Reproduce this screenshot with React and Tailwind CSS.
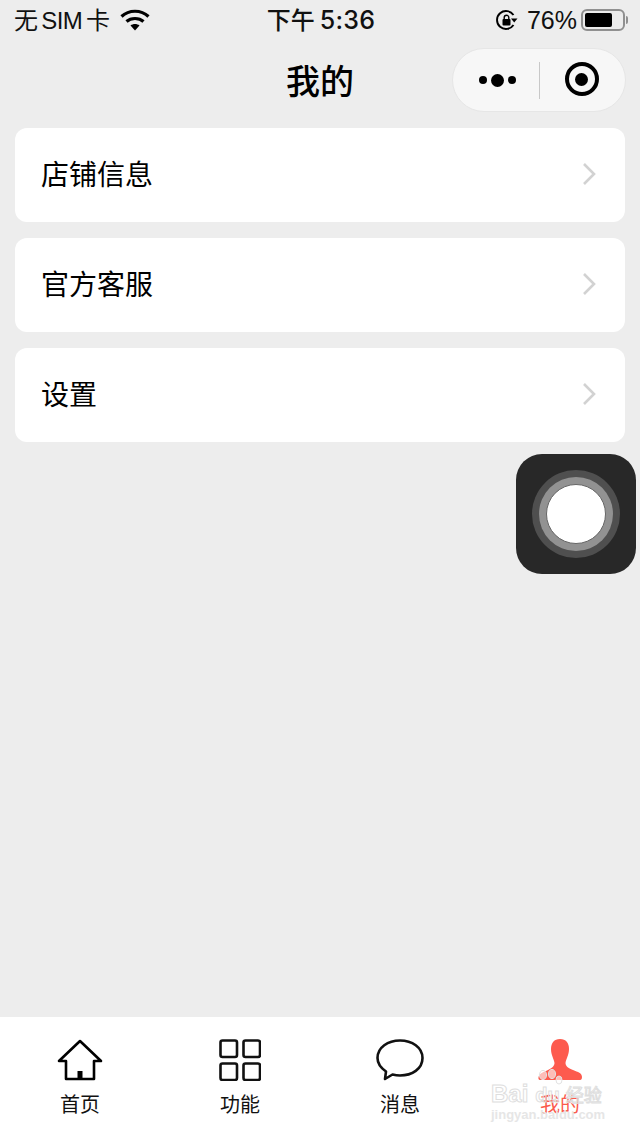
const cjk = { fontFamily: '"Liberation Sans", "Noto Sans CJK SC", sans-serif' };

function Row({ label }) {
  return (
    <div className="flex h-[94px] items-center justify-between rounded-[12px] bg-white pl-[26px] pr-[29px]">
      <span className="pt-[2px] text-[28px] leading-none text-black" style={cjk}>{label}</span>
      <svg className="mt-[-2px]" width="14" height="24" viewBox="0 0 14 24" fill="none">
        <path d="M2 2 L12 12 L2 22" stroke="#d2d2d2" strokeWidth="2.6" />
      </svg>
    </div>
  );
}

function Tab({ icon, label, active }) {
  return (
    <div className="flex flex-1 flex-col items-center pt-[19px]">
      <div className="flex h-[48px] w-[50px] items-center justify-center">{icon}</div>
      <span className={`mt-[8px] text-[20px] leading-[26px] ${active ? "text-[#fb5a4c]" : "text-[#111]"}`} style={cjk}>{label}</span>
    </div>
  );
}

export default function App() {
  return (
    <div className="relative flex h-[1136px] w-[640px] flex-col overflow-hidden bg-[#ededed]" style={cjk}>
      <div className="grid h-[40px] grid-cols-[1fr_auto_1fr] items-center pl-[14px] pr-[12px] text-[25px] leading-none text-[#111]">
        <div className="flex items-center gap-[10px]">
          <span className="pt-[2px] text-[24px] tracking-[-0.5px] [word-spacing:-2.5px]">无 SIM 卡</span>
          <svg width="30" height="22" viewBox="0 0 30 22" fill="none" stroke="#000" strokeWidth="3.2">
            <path d="M1.5 7.5 C9 0.5 21 0.5 28.5 7.5" />
            <path d="M6.5 12.5 C11 8.5 19 8.5 23.5 12.5" />
            <path d="M15 21.5 L10.5 16.5 C13 14.5 17 14.5 19.5 16.5 Z" fill="#000" stroke="none" />
          </svg>
        </div>
        <div className="flex items-center gap-[5px] pt-[1px]">
          <span className="text-[24px] font-medium">下午</span>
          <span className="text-[25px] font-medium tracking-[0.2px]" style={{ fontFamily: "Inter, sans-serif" }}>5:36</span>
        </div>
        <div className="flex items-center justify-end gap-[6px]">
          <svg width="22" height="22" viewBox="0 0 22 22" fill="none">
            <path d="M17.5 16 A9 9 0 1 1 17.5 6" stroke="#000" strokeWidth="1.9" />
            <path d="M15 9.5 L21.5 9.5 L18.2 13.5 Z" fill="#000" />
            <rect x="6.5" y="10" width="8" height="6.5" rx="1" fill="#000" />
            <path d="M8.2 10.5 V8.5 a2.3 2.3 0 0 1 4.6 0 V10.5" stroke="#000" strokeWidth="1.4" />
          </svg>
          <span className="ml-[3px] mr-[-2px] text-[25px]">76%</span>
          <div className="flex items-center">
            <div className="flex h-[22px] w-[44px] items-center rounded-[6px] border-2 border-[#909090] p-[2px]">
              <div className="h-[14px] w-[27px] rounded-[2px] bg-black" />
            </div>
            <div className="ml-[1px] h-[8px] w-[2px] rounded-r-full bg-[#909090]" />
          </div>
        </div>
      </div>

      <div className="relative flex h-[88px] items-center justify-center">
        <span className="mt-[-4px] text-[34px] font-medium leading-none text-black">我的</span>
        <div className="absolute left-[452px] top-[8px] flex h-[64px] w-[174px] items-center rounded-full border border-[#e6e6e6] bg-[#f7f7f7]">
          <div className="flex w-[86px] items-center justify-center gap-[4px] pl-[2px]">
            <div className="h-[8px] w-[8px] rounded-full bg-black" />
            <div className="h-[13px] w-[13px] rounded-full bg-black" />
            <div className="h-[8px] w-[8px] rounded-full bg-black" />
          </div>
          <div className="h-[37px] w-px bg-[#c8c8c8]" />
          <div className="flex flex-1 items-center justify-center pr-[2px]">
            <div className="mt-[-2px] flex h-[34px] w-[34px] items-center justify-center rounded-full border-[4px] border-black">
              <div className="h-[13px] w-[13px] rounded-full bg-black" />
            </div>
          </div>
        </div>
      </div>

      <div className="flex flex-1 flex-col gap-[16px] px-[15px]">
        <Row label="店铺信息" />
        <Row label="官方客服" />
        <Row label="设置" />
      </div>

      <div className="flex h-[119px] bg-white">
        <Tab
          label="首页"
          icon={
            <svg width="46" height="42" viewBox="0 0 46 42" fill="none" stroke="#000" strokeWidth="2.6" strokeLinejoin="round">
              <path d="M23 2 L44 22 H37 V40 H9 V22 H2 Z" />
              <path d="M23 32 V40" strokeWidth="5" />
            </svg>
          }
        />
        <Tab
          label="功能"
          icon={
            <svg width="42" height="42" viewBox="0 0 42 42" fill="none" stroke="#111" strokeWidth="2.6">
              <rect x="1.5" y="1.5" width="16.5" height="16.5" rx="2" />
              <rect x="24.5" y="1.5" width="16.5" height="16.5" rx="2" />
              <rect x="1.5" y="24.5" width="16.5" height="16.5" rx="2" />
              <rect x="24.5" y="24.5" width="16.5" height="16.5" rx="2" />
            </svg>
          }
        />
        <Tab
          label="消息"
          icon={
            <svg width="48" height="42" viewBox="0 0 48 42" fill="none" stroke="#111" strokeWidth="2.6" strokeLinejoin="round">
              <path d="M24 1.5 C36 1.5 46.5 8.5 46.5 19 C46.5 30 36 36.5 24 36.5 C21 36.5 18.5 36 16.5 35.5 L9 40 L10 32.5 C5 29 1.5 24.5 1.5 19 C1.5 8.5 12 1.5 24 1.5 Z" />
            </svg>
          }
        />
        <Tab
          active
          label="我的"
          icon={
            <svg width="46" height="42" viewBox="0 0 46 42">
              <path d="M23 0 C29 0 32 4 32 10 C32 16 29 20 28.5 24 C28.5 27 31 29 36 31 C41 33 45 34 45 38 C45 40.5 44 41 42 41 L4 41 C2 41 1 40.5 1.5 38 C2.5 34 7 33 11 31 C15 29 17.5 27 17.5 24 C17 20 14 16 14 10 C14 4 17 0 23 0 Z" fill="#fd5b4e" />
            </svg>
          }
        />
      </div>

      <div className="absolute left-[516px] top-[454px] flex h-[120px] w-[120px] items-center justify-center rounded-[26px] bg-[#282828]">
        <div className="flex h-[88px] w-[88px] items-center justify-center rounded-full bg-[#4f4f4f]">
          <div className="flex h-[74px] w-[74px] items-center justify-center rounded-full bg-[#929292]">
            <div className="h-[60px] w-[60px] rounded-full border border-[#666] bg-white" />
          </div>
        </div>
      </div>

      <div className="pointer-events-none absolute left-[491px] top-[1066px] w-[120px]">
        <svg className="absolute left-[44px] top-[0px]" width="30" height="24" viewBox="0 0 30 24" fill="#ffffff" fillOpacity="0.6" stroke="#e2e2e2" strokeWidth="1">
          <ellipse cx="8" cy="9" rx="3.6" ry="4.6" />
          <ellipse cx="17" cy="8" rx="3.6" ry="4.6" />
          <ellipse cx="24" cy="14" rx="3" ry="4" />
        </svg>
        <div className="mt-[14px] flex h-[27px] items-baseline whitespace-nowrap font-bold leading-[27px] text-transparent [-webkit-text-stroke:1px_#dedede]">
          <span className="text-[24px]">Bai</span>
          <span className="ml-[7px] text-[20px]">du</span>
          <span className="ml-[6px] text-[18px] font-normal">经验</span>
        </div>
        <div className="whitespace-nowrap text-[13px] font-bold leading-[16px] text-[#e6e6e6]">jingyan.baidu.com</div>
      </div>
    </div>
  );
}
